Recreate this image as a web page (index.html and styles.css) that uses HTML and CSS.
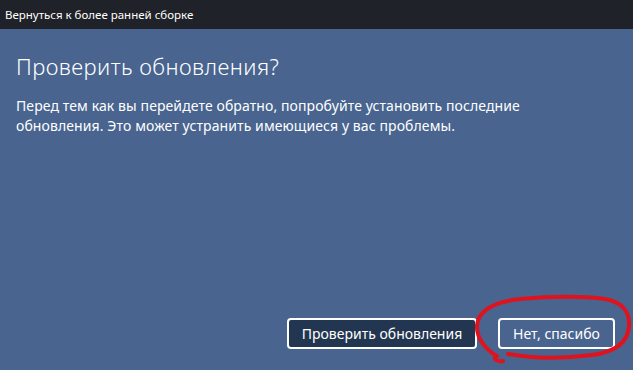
FILE: index.html
```html
<!DOCTYPE html>
<html lang="ru">
<head>
<meta charset="utf-8">
<link rel="stylesheet" href="styles.css">
</head>
<body>
<div class="window">
  <div class="titlebar">Вернуться к более ранней сборке</div>
  <div class="content">
    <h1 class="heading">Проверить обновления?</h1>
    <p class="text">Перед тем как вы перейдете обратно, попробуйте установить последние обновления. Это может устранить имеющиеся у вас проблемы.</p>
    <div class="actions">
      <button class="btn btn-primary">Проверить обновления</button>
      <button class="btn btn-secondary">Нет, спасибо</button>
    </div>
  </div>
  <svg class="scribble" width="633" height="370" viewBox="0 0 633 370">
    <path d="M503 361 C496 362 492 358 497 356 C486 350 476 338 477 325 C478 312 492 302 520 299 C550 296 585 296 605 299 C622 302 630 312 629 326 C628 342 615 352 592 355 C560 359 530 358 508 354" fill="none" stroke="#e0121e" stroke-width="4" stroke-linecap="round" stroke-linejoin="round"/>
  </svg>
</div>
</body>
</html>
```

FILE: styles.css
```css
html, body {
  margin: 0;
  padding: 0;
}
body {
  width: 633px;
  height: 370px;
  overflow: hidden;
  font-family: "Noto Sans", "Open Sans", sans-serif;
}
.window {
  position: relative;
  width: 633px;
  height: 370px;
  display: flex;
  flex-direction: column;
  background: #48648f;
}
.titlebar {
  height: 29px;
  background: #1f2228;
  color: #ffffff;
  font-size: 11.5px;
  line-height: 29px;
  padding-left: 5px;
}
.content {
  flex: 1;
  display: flex;
  flex-direction: column;
  padding: 22px 18px 21px 16px;
}
.heading {
  margin: 0;
  font-weight: 300;
  font-size: 22px;
  line-height: 30px;
  color: #ffffff;
  letter-spacing: 0.45px;
}
.text {
  margin: 15px 0 0;
  font-size: 14px;
  line-height: 20px;
  color: #ffffff;
  width: 580px;
  letter-spacing: 0.1px;
}
.actions {
  margin-top: auto;
  display: flex;
  justify-content: flex-end;
  gap: 21px;
}
.btn {
  height: 31px;
  border: 2px solid #ffffff;
  border-radius: 4px;
  color: #ffffff;
  font-family: inherit;
  font-size: 14px;
  padding: 0 10px;
}
.btn-primary {
  width: 190px;
  background: #233651;
}
.btn-secondary {
  width: 117px;
  background: #48648f;
}
.scribble {
  position: absolute;
  left: 0;
  top: 0;
  pointer-events: none;
}
```
